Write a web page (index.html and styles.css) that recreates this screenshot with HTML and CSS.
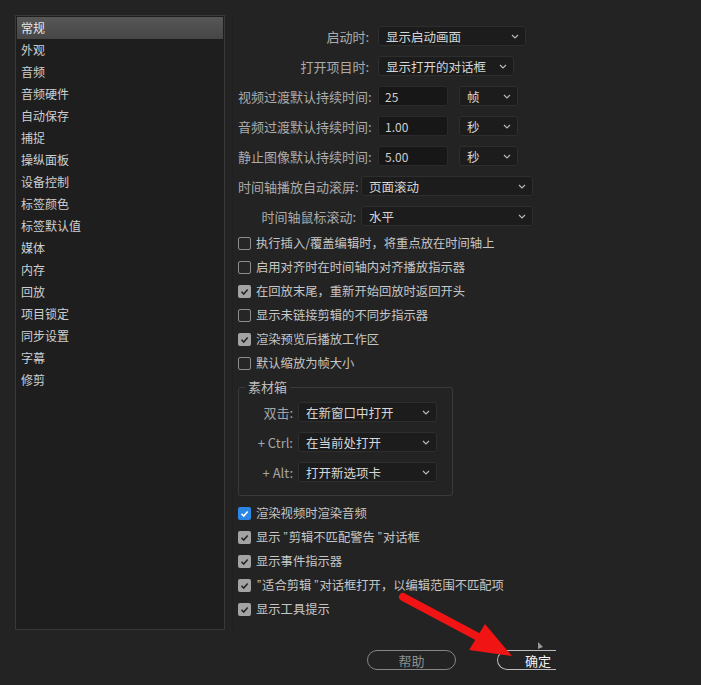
FILE: index.html
```html
<!DOCTYPE html>
<html lang="zh-CN">
<head>
    <meta charset="UTF-8">
    <title>首选项 - 常规</title>
    <link rel="stylesheet" href="styles.css">
</head>
<body>
    <div class="window">
        <div class="main">
            <ul class="category-list">
                <li class="category active">常规</li>
                <li class="category">外观</li>
                <li class="category">音频</li>
                <li class="category">音频硬件</li>
                <li class="category">自动保存</li>
                <li class="category">捕捉</li>
                <li class="category">操纵面板</li>
                <li class="category">设备控制</li>
                <li class="category">标签颜色</li>
                <li class="category">标签默认值</li>
                <li class="category">媒体</li>
                <li class="category">内存</li>
                <li class="category">回放</li>
                <li class="category">项目锁定</li>
                <li class="category">同步设置</li>
                <li class="category">字幕</li>
                <li class="category">修剪</li>
            </ul>

            <div class="settings">
                <div class="field-row">
                    <span class="field-label">启动时:</span>
                    <div class="dropdown w-148">显示启动画面<svg class="chevron" viewBox="0 0 8 5"><path d="M1 1l3 3 3-3"/></svg></div>
                </div>
                <div class="field-row">
                    <span class="field-label">打开项目时:</span>
                    <div class="dropdown w-136">显示打开的对话框<svg class="chevron" viewBox="0 0 8 5"><path d="M1 1l3 3 3-3"/></svg></div>
                </div>
                <div class="field-row">
                    <span class="field-label">视频过渡默认持续时间:</span>
                    <div class="text-input">25</div>
                    <div class="dropdown unit">帧<svg class="chevron" viewBox="0 0 8 5"><path d="M1 1l3 3 3-3"/></svg></div>
                </div>
                <div class="field-row">
                    <span class="field-label">音频过渡默认持续时间:</span>
                    <div class="text-input">1.00</div>
                    <div class="dropdown unit">秒<svg class="chevron" viewBox="0 0 8 5"><path d="M1 1l3 3 3-3"/></svg></div>
                </div>
                <div class="field-row">
                    <span class="field-label">静止图像默认持续时间:</span>
                    <div class="text-input">5.00</div>
                    <div class="dropdown unit">秒<svg class="chevron" viewBox="0 0 8 5"><path d="M1 1l3 3 3-3"/></svg></div>
                </div>
                <div class="field-row">
                    <span class="field-label short">时间轴播放自动滚屏:</span>
                    <div class="dropdown w-172">页面滚动<svg class="chevron" viewBox="0 0 8 5"><path d="M1 1l3 3 3-3"/></svg></div>
                </div>
                <div class="field-row">
                    <span class="field-label short">时间轴鼠标滚动:</span>
                    <div class="dropdown w-172">水平<svg class="chevron" viewBox="0 0 8 5"><path d="M1 1l3 3 3-3"/></svg></div>
                </div>

                <div class="check-row"><span class="checkbox"></span>执行插入/覆盖编辑时，将重点放在时间轴上</div>
                <div class="check-row"><span class="checkbox"></span>启用对齐时在时间轴内对齐播放指示器</div>
                <div class="check-row"><span class="checkbox checked"><svg viewBox="0 0 13 13"><path d="M3.5 6.8l2.2 2.2 4-4.6"/></svg></span>在回放末尾，重新开始回放时返回开头</div>
                <div class="check-row"><span class="checkbox"></span>显示未链接剪辑的不同步指示器</div>
                <div class="check-row"><span class="checkbox checked"><svg viewBox="0 0 13 13"><path d="M3.5 6.8l2.2 2.2 4-4.6"/></svg></span>渲染预览后播放工作区</div>
                <div class="check-row"><span class="checkbox"></span>默认缩放为帧大小</div>

                <fieldset class="bin-group">
                    <legend>素材箱</legend>
                    <div class="bin-row">
                        <span class="bin-label">双击:</span>
                        <div class="dropdown w-139">在新窗口中打开<svg class="chevron" viewBox="0 0 8 5"><path d="M1 1l3 3 3-3"/></svg></div>
                    </div>
                    <div class="bin-row">
                        <span class="bin-label">+ Ctrl:</span>
                        <div class="dropdown w-139">在当前处打开<svg class="chevron" viewBox="0 0 8 5"><path d="M1 1l3 3 3-3"/></svg></div>
                    </div>
                    <div class="bin-row">
                        <span class="bin-label">+ Alt:</span>
                        <div class="dropdown w-139">打开新选项卡<svg class="chevron" viewBox="0 0 8 5"><path d="M1 1l3 3 3-3"/></svg></div>
                    </div>
                </fieldset>

                <div class="check-row"><span class="checkbox checked blue"><svg viewBox="0 0 13 13"><path d="M3.5 6.8l2.2 2.2 4-4.6"/></svg></span>渲染视频时渲染音频</div>
                <div class="check-row"><span class="checkbox checked"><svg viewBox="0 0 13 13"><path d="M3.5 6.8l2.2 2.2 4-4.6"/></svg></span>显示<span class="quote">”</span>剪辑不匹配警告<span class="quote">”</span>对话框</div>
                <div class="check-row"><span class="checkbox checked"><svg viewBox="0 0 13 13"><path d="M3.5 6.8l2.2 2.2 4-4.6"/></svg></span>显示事件指示器</div>
                <div class="check-row"><span class="checkbox checked"><svg viewBox="0 0 13 13"><path d="M3.5 6.8l2.2 2.2 4-4.6"/></svg></span><span class="quote lead">”</span>适合剪辑<span class="quote">”</span>对话框打开，以编辑范围不匹配项</div>
                <div class="check-row"><span class="checkbox checked"><svg viewBox="0 0 13 13"><path d="M3.5 6.8l2.2 2.2 4-4.6"/></svg></span>显示工具提示</div>
            </div>
        </div>

        <div class="footer">
            <button class="pill-button help">帮助</button>
            <button class="pill-button ok">确定</button>
        </div>

        <!-- annotation drawn over the dialog -->
        <svg class="annotation" width="701" height="685" viewBox="0 0 701 685">
            <line x1="403" y1="597" x2="482" y2="639" stroke="#f01414" stroke-width="8" stroke-linecap="round"/>
            <polygon points="485,624 469,650 512,656" fill="#f01414"/>
            <polygon points="538,642 538,649 543,647" fill="#9a9a9a"/>
        </svg>
    </div>
</body>
</html>
```

FILE: styles.css
```css
* {
    margin: 0;
    padding: 0;
    box-sizing: border-box;
}

body {
    background-color: #232323;
    font-family: "Noto Sans CJK SC", "Noto Sans", sans-serif;
    color: #c4c4c4;
}

.window {
    position: relative;
    width: 701px;
    height: 685px;
    overflow: hidden;
}

.main {
    display: flex;
    padding: 15px 0 0 15px;
}

/* left category list */
.category-list {
    list-style: none;
    width: 210px;
    height: 615px;
    background-color: #1e1e1e;
    border: 1px solid #383838;
    padding: 1px;
}

.category {
    height: 22px;
    line-height: 21px;
    padding-left: 4px;
    font-size: 12px;
    color: #cfcfcf;
}

.category.active {
    background: linear-gradient(#575757, #464646);
    color: #e6e6e6;
}

/* right settings panel */
.settings {
    margin-left: 7px;
    padding: 6px 0 0 5px;
    border-left: 1px solid #202020;
}

.field-row {
    display: flex;
    align-items: center;
    height: 30px;
}

.field-label {
    width: 131px;
    margin-right: 9px;
    text-align: right;
    font-size: 13px;
    color: #ababab;
    white-space: nowrap;
}

.field-label.short {
    width: 118px;
    margin-right: 5px;
}

.dropdown {
    position: relative;
    height: 20px;
    line-height: 19px;
    padding-left: 7px;
    background-color: #1c1c1c;
    border: 1px solid #2e2e2e;
    border-radius: 3px;
    font-size: 12.5px;
    color: #d6d6d6;
    white-space: nowrap;
}

.chevron {
    position: absolute;
    right: 6px;
    top: 7px;
    width: 8px;
    height: 5px;
    fill: none;
    stroke: #b8b8b8;
    stroke-width: 1.2;
}

.w-148 { width: 148px; }
.w-136 { width: 136px; }
.w-172 { width: 172px; }
.w-139 { width: 139px; }

.dropdown.unit {
    width: 59px;
    margin-left: 11px;
}

.text-input {
    width: 70px;
    height: 20px;
    line-height: 19px;
    padding-left: 6px;
    background-color: #171717;
    border: 1px solid #2a2a2a;
    border-radius: 2px;
    font-size: 12px;
    color: #cdcdcd;
}

/* checkboxes */
.check-row {
    display: flex;
    align-items: center;
    height: 24px;
    font-size: 12.3px;
    color: #c6c6c6;
    white-space: nowrap;
}

.checkbox {
    display: flex;
    width: 13px;
    height: 13px;
    margin-right: 5px;
    border: 1.5px solid #8c8c8c;
    border-radius: 2px;
    background-color: #262626;
}

.checkbox.checked {
    border: none;
    background-color: #a3a3a3;
}

.checkbox.blue {
    background-color: #2b86e4;
}

.checkbox svg {
    width: 13px;
    height: 13px;
    fill: none;
    stroke: #262626;
    stroke-width: 1.6;
}

.checkbox.blue svg {
    stroke: #ffffff;
}

.quote {
    font-family: "Liberation Sans", sans-serif;
    padding: 0 1px 0 3px;
}

.quote.lead {
    padding-left: 1px;
}

/* bin group */
.bin-group {
    width: 215px;
    margin: 3px 0 5px 0;
    padding: 1px 0 8px 0;
    border: 1px solid #3a3a3a;
    border-radius: 3px;
}

.bin-group legend {
    margin-left: 6px;
    padding: 0 3px;
    font-size: 13px;
    line-height: 18px;
    color: #bdbdbd;
}

.bin-row {
    display: flex;
    align-items: center;
    height: 30px;
}

.bin-label {
    width: 54px;
    margin-right: 5px;
    text-align: right;
    font-size: 13px;
    color: #a5a5a5;
    white-space: nowrap;
}

/* footer buttons */
.footer {
    display: flex;
    gap: 41px;
    padding: 20px 0 0 367px;
}

.pill-button {
    height: 20px;
    background: none;
    border: 1px solid #858585;
    border-radius: 10px;
    font-family: "Noto Sans CJK SC", sans-serif;
    font-size: 13px;
    line-height: 17px;
}

.pill-button.help {
    width: 89px;
    color: #8e8e8e;
}

.pill-button.ok {
    width: 59px;
    padding-left: 22px;
    border-color: #bdbdbd;
    border-right: none;
    border-radius: 10px 0 0 10px;
    color: #f2f2f2;
}

.annotation {
    position: absolute;
    left: 0;
    top: 0;
    pointer-events: none;
}
```
